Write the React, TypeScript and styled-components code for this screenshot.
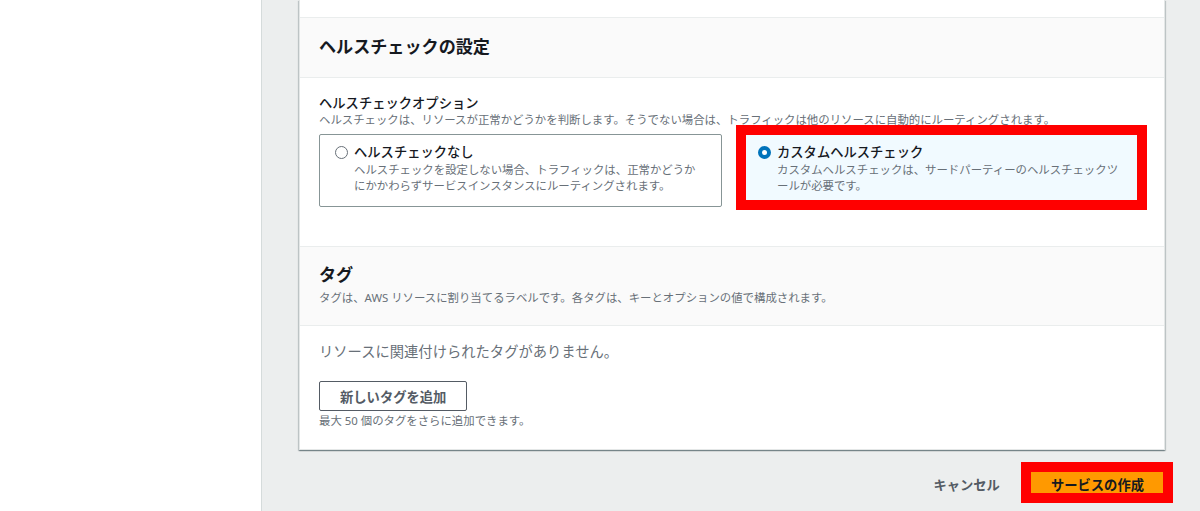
import { useState } from "react";
import styled, { createGlobalStyle } from "styled-components";

const GlobalStyle = createGlobalStyle`
  html, body {
    margin: 0;
    padding: 0;
    background: #eceeee;
    font-family: "Noto Sans", "Noto Sans CJK JP", sans-serif;
    color: #16191f;
  }
`;

const Page = styled.div`
  display: flex;
  height: 511px;
  overflow: hidden;
`;

const Sidebar = styled.aside`
  width: 261px;
  flex-shrink: 0;
  background: #ffffff;
  border-right: 1px solid #d5dbdb;
`;

const Main = styled.main`
  flex: 1;
  padding: 0 35px 0 37px;
`;

const Card = styled.div`
  background: #ffffff;
  border: 1px solid #e4e7e7;
  border-top: none;
  box-shadow: 0 1px 1px 0 rgba(0, 28, 36, 0.3), 1px 1px 1px 0 rgba(0, 28, 36, 0.15),
    -1px 1px 1px 0 rgba(0, 28, 36, 0.15);
`;

const PrevTail = styled.div`
  height: 17px;
`;

const SectionHeader = styled.div<{ $tight?: boolean }>`
  background: #fafafa;
  border-top: 1px solid #eaeded;
  border-bottom: 1px solid #eaeded;
  padding: ${(p) => (p.$tight ? "16px 19px 19px" : "17px 19px 18px")};
`;

const Title = styled.h2`
  margin: 0;
  font-size: 17.1px;
  line-height: 24px;
  font-weight: 700;
  color: #16191f;
`;

const HeaderDesc = styled.p`
  margin: 3px 0 0;
  font-size: 11.4px;
  line-height: 16px;
  color: #687078;
`;

const SectionBody = styled.div<{ $bottom: number }>`
  padding: 16px 19px ${(p) => p.$bottom}px;
`;

const Label = styled.div`
  font-size: 13.3px;
  line-height: 18px;
  font-weight: 500;
  color: #16191f;
`;

const Hint = styled.div<{ $top?: number }>`
  margin-top: ${(p) => p.$top ?? 0}px;
  font-size: 11.4px;
  line-height: 16px;
  color: #687078;
`;

const TileGrid = styled.div`
  display: grid;
  grid-template-columns: 1fr 1fr;
  gap: 20px;
  margin-top: 6px;
`;

const Tile = styled.label<{ $selected: boolean }>`
  position: relative;
  display: flex;
  align-items: flex-start;
  gap: 6px;
  padding: 8px 19px 12px 15px;
  min-height: 51px;
  border: 1px solid ${(p) => (p.$selected ? "#00a1c9" : "#879596")};
  border-radius: 2px;
  background: ${(p) => (p.$selected ? "#f1faff" : "#ffffff")};
  cursor: pointer;
`;

const Radio = styled.span<{ $checked: boolean }>`
  flex-shrink: 0;
  box-sizing: border-box;
  width: 13px;
  height: 13px;
  margin-top: 3px;
  border-radius: 50%;
  background: #ffffff;
  border: ${(p) => (p.$checked ? "4px solid #0073bb" : "1.5px solid #687078")};
`;

const TileText = styled.div`
  flex: 1;
  min-width: 0;
`;

const TileLabel = styled.div`
  font-size: 13.3px;
  line-height: 19px;
  font-weight: 500;
  color: #16191f;
`;

const TileDesc = styled.div`
  font-size: 11.4px;
  line-height: 15.5px;
  color: #687078;
`;

const Annotation = styled.span<{ $t: number; $r: number; $b: number; $l: number }>`
  position: absolute;
  top: ${(p) => p.$t}px;
  right: ${(p) => p.$r}px;
  bottom: ${(p) => p.$b}px;
  left: ${(p) => p.$l}px;
  border: 10px solid #ff0000;
  pointer-events: none;
`;

const EmptyText = styled.div`
  font-size: 14.3px;
  line-height: 20px;
  color: #687078;
`;

const OutlineButton = styled.button`
  display: block;
  margin-top: 19px;
  height: 30px;
  padding: 0 20px;
  border: 1px solid #545b64;
  border-radius: 2px;
  background: #ffffff;
  color: #545b64;
  font-family: inherit;
  font-size: 13.3px;
  font-weight: 700;
`;

const Footer = styled.div`
  display: flex;
  justify-content: flex-end;
  align-items: center;
  gap: 10px;
  margin-top: 19px;
`;

const LinkButton = styled.button`
  height: 30px;
  padding: 0 20px;
  border: none;
  background: transparent;
  color: #545b64;
  font-family: inherit;
  font-size: 13.3px;
  font-weight: 700;
`;

const PrimaryWrap = styled.div`
  position: relative;
`;

const PrimaryButton = styled.button`
  display: block;
  height: 30px;
  padding: 0 20px;
  border: 1px solid #ec7211;
  border-radius: 2px;
  background: #ff9900;
  color: #16191f;
  font-family: inherit;
  font-size: 13.3px;
  font-weight: 700;
`;

export default function App() {
  const [check, setCheck] = useState<"none" | "custom">("custom");

  return (
    <>
      <GlobalStyle />
      <Page>
        <Sidebar />
        <Main>
          <Card>
            <PrevTail />
            <SectionHeader>
              <Title>ヘルスチェックの設定</Title>
            </SectionHeader>
            <SectionBody $bottom={39}>
              <Label>ヘルスチェックオプション</Label>
              <Hint>ヘルスチェックは、リソースが正常かどうかを判断します。そうでない場合は、トラフィックは他のリソースに自動的にルーティングされます。</Hint>
              <TileGrid>
                <Tile $selected={check === "none"} onClick={() => setCheck("none")}>
                  <Radio $checked={check === "none"} />
                  <TileText>
                    <TileLabel>ヘルスチェックなし</TileLabel>
                    <TileDesc>ヘルスチェックを設定しない場合、トラフィックは、正常かどうかにかかわらずサービスインスタンスにルーティングされます。</TileDesc>
                  </TileText>
                </Tile>
                <Tile $selected={check === "custom"} onClick={() => setCheck("custom")}>
                  <Radio $checked={check === "custom"} />
                  <TileText>
                    <TileLabel>カスタムヘルスチェック</TileLabel>
                    <TileDesc>カスタムヘルスチェックは、サードパーティーのヘルスチェックツールが必要です。</TileDesc>
                  </TileText>
                  <Annotation $t={-10} $r={-3} $b={-4} $l={-7} />
                </Tile>
              </TileGrid>
            </SectionBody>
            <SectionHeader $tight>
              <Title>タグ</Title>
              <HeaderDesc>タグは、AWS リソースに割り当てるラベルです。各タグは、キーとオプションの値で構成されます。</HeaderDesc>
            </SectionHeader>
            <SectionBody $bottom={20}>
              <EmptyText>リソースに関連付けられたタグがありません。</EmptyText>
              <OutlineButton>新しいタグを追加</OutlineButton>
              <Hint $top={2}>最大 50 個のタグをさらに追加できます。</Hint>
            </SectionBody>
          </Card>
          <Footer>
            <LinkButton>キャンセル</LinkButton>
            <PrimaryWrap>
              <PrimaryButton>サービスの作成</PrimaryButton>
              <Annotation $t={-7} $r={-8} $b={-4} $l={-9} />
            </PrimaryWrap>
          </Footer>
        </Main>
      </Page>
    </>
  );
}
